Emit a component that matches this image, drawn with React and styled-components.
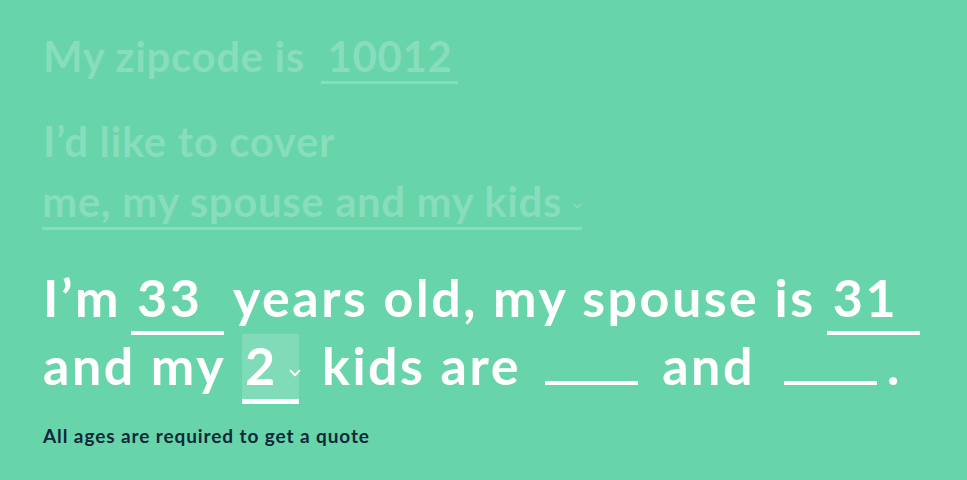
import React from "react";
import styled, { createGlobalStyle } from "styled-components";

const GlobalStyle = createGlobalStyle`
  html, body {
    margin: 0;
    padding: 0;
    background-color: #67d4aa;
  }
  body {
    font-family: "Lato", "Noto Sans", sans-serif;
  }
`;

function Chevron({ small }) {
  return (
    <ChevronIcon
      width={small ? 9 : 12}
      height={small ? 6 : 8}
      viewBox="0 0 11 7"
      $small={small}
    >
      <polyline
        points="1.5,1.5 5.5,5.5 9.5,1.5"
        fill="none"
        stroke="currentColor"
        strokeWidth="1.8"
        strokeLinecap="round"
        strokeLinejoin="round"
      />
    </ChevronIcon>
  );
}

function App() {
  return (
    <Page>
      <GlobalStyle />
      <Faded>
        <FadedRow>
          My zipcode is <FadedField $width={137}>10012</FadedField>
        </FadedRow>
        <FadedGroup>
          <FadedRow>I’d like to cover</FadedRow>
          <FadedRow>
            <FadedSelect>
              me, my spouse and my kids
              <Chevron small />
            </FadedSelect>
          </FadedRow>
        </FadedGroup>
      </Faded>
      <Sentence>
        <Row>
          I’m <Field $width={93} $left={-5} $right={-5}>33</Field> years old, my
          spouse is <Field $width={93} $left={-4} $right={-4}>31</Field>
        </Row>
        <Row>
          and my{" "}
          <Select>
            2
            <Chevron />
          </Select>{" "}
          kids are <Field $width={93} $left={9} $right={9} /> and{" "}
          <Field $width={93} $left={14} $right={10} />.
        </Row>
      </Sentence>
      <Note>All ages are required to get a quote</Note>
    </Page>
  );
}

const Page = styled.div`
  padding: 26px 43px 0;
  height: 480px;
  box-sizing: border-box;
  overflow: hidden;
`;

const Faded = styled.div`
  display: flex;
  flex-direction: column;
  gap: 25px;
  color: rgba(255, 255, 255, 0.22);
  font-size: 42px;
  font-weight: 700;
  letter-spacing: 0.6px;
`;

const FadedGroup = styled.div`
  display: flex;
  flex-direction: column;
`;

const FadedRow = styled.div`
  height: 60px;
  line-height: 60px;
  white-space: nowrap;
`;

const FadedField = styled.span`
  display: inline-block;
  width: ${(p) => p.$width}px;
  box-sizing: border-box;
  line-height: 42px;
  padding: 0 0 4px 7px;
  margin-left: 5px;
  border-bottom: 3px solid rgba(255, 255, 255, 0.22);
`;

const FadedSelect = styled.span`
  display: inline-flex;
  align-items: baseline;
  gap: 11px;
  line-height: 42px;
  padding: 0 0 5px 0;
  margin-left: -1px;
  border-bottom: 3px solid rgba(255, 255, 255, 0.22);
`;

const ChevronIcon = styled.svg`
  flex: none;
  display: block;
  align-self: center;
  margin-top: ${(p) => (p.$small ? "10px" : "15px")};
`;

const Sentence = styled.div`
  margin-top: 32px;
  color: #ffffff;
  font-size: 52px;
  font-weight: 700;
  letter-spacing: 2.5px;
`;

const Row = styled.div`
  height: 68px;
  line-height: 68px;
  white-space: nowrap;
`;

const Field = styled.span`
  display: inline-block;
  width: ${(p) => p.$width}px;
  box-sizing: border-box;
  line-height: 52px;
  padding: 0 0 8px 6px;
  margin: 0 ${(p) => p.$right}px 0 ${(p) => p.$left}px;
  border-bottom: 4px solid #ffffff;
  vertical-align: baseline;
`;

const Select = styled.span`
  display: inline-flex;
  align-items: baseline;
  gap: 11px;
  width: 57px;
  box-sizing: border-box;
  line-height: 52px;
  padding: 5px 5px 8px 3px;
  background-color: rgba(255, 255, 255, 0.17);
  border-bottom: 5px solid #ffffff;
  margin: 0 8px 0 2px;
`;

const Note = styled.div`
  margin-top: 25px;
  color: #10283a;
  font-size: 19px;
  line-height: 24px;
  font-weight: 700;
  letter-spacing: 0.9px;
`;

export default App;
